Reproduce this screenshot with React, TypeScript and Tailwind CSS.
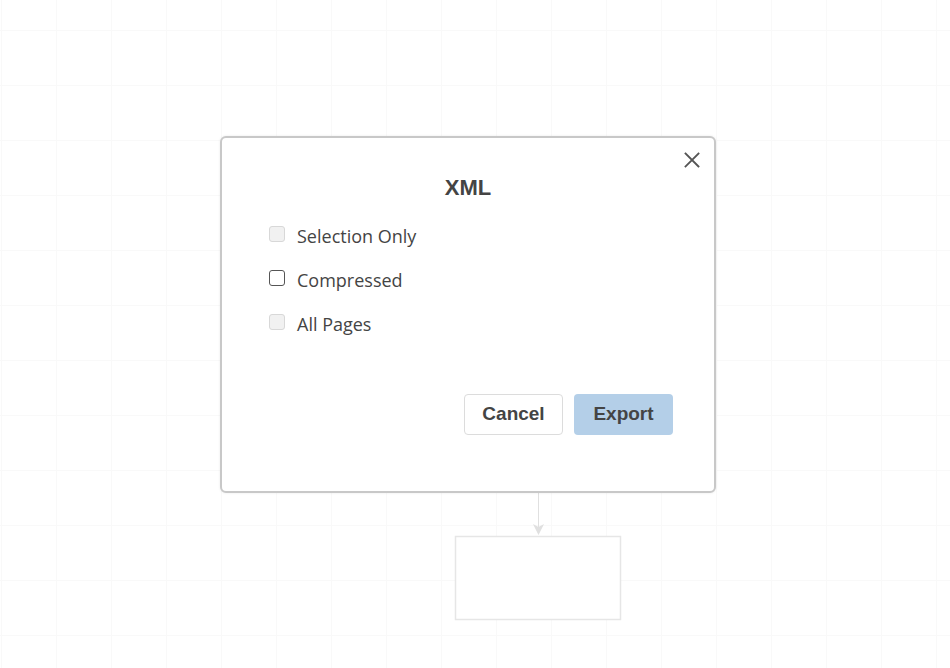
import React from "react";

export default function App() {
  return (
    <div className="relative w-[950px] h-[668px] overflow-hidden bg-white bg-[linear-gradient(to_right,#f9f9f9_1px,transparent_1px),linear-gradient(to_bottom,#f9f9f9_1px,transparent_1px)] bg-[size:55px_55px] bg-[position:1px_30px]" style={{ fontFamily: '"Open Sans", "Noto Sans", sans-serif' }}>
      {/* diagram behind */}
      <svg className="absolute left-0 top-0" width="950" height="668">
        <line x1="538.5" y1="480" x2="538.5" y2="528" stroke="#e0e0e0" strokeWidth="1" />
        <path d="M533 524 L538.5 535 L544 524 L538.5 527 Z" fill="#e0e0e0" />
        <rect x="455.5" y="536.5" width="165" height="83" fill="#fff" stroke="#e6e6e6" strokeWidth="1.5" />
      </svg>

      {/* dialog */}
      <div className="absolute left-[220px] top-[136px] w-[496px] h-[357px] bg-white border-2 border-[#c8c8c8] rounded-[6px] shadow-[0_0_3px_rgba(0,0,0,0.08)]">
        <button className="absolute right-[12px] top-[12px] w-[20px] h-[20px] flex items-center justify-center text-[#555]">
          <svg width="16" height="16" viewBox="0 0 16 16">
            <path d="M1.5 1.5 L14.5 14.5 M14.5 1.5 L1.5 14.5" stroke="#555" strokeWidth="1.8" strokeLinecap="square" />
          </svg>
        </button>
        <div className="pt-[36px] text-center text-[22px] font-bold text-[#444] leading-[28px]" style={{ fontFamily: '"Liberation Sans", Arial, sans-serif' }}>XML</div>
        <div className="mt-[20px] pl-[47px] flex flex-col gap-[16px]">
          <label className="flex items-center h-[28px] gap-[12px] text-[18px] text-[#444]">
            <span className="w-[16px] h-[16px] rounded-[3px] border border-[#d8d8d8] bg-[#f1f1f1] mt-[-4px]" />
            <span>Selection Only</span>
          </label>
          <label className="flex items-center h-[28px] gap-[12px] text-[18px] text-[#444]">
            <span className="w-[16px] h-[16px] rounded-[3px] border border-[#555] bg-white mt-[-4px]" />
            <span>Compressed</span>
          </label>
          <label className="flex items-center h-[28px] gap-[12px] text-[18px] text-[#444]">
            <span className="w-[16px] h-[16px] rounded-[3px] border border-[#d8d8d8] bg-[#f1f1f1] mt-[-4px]" />
            <span>All Pages</span>
          </label>
        </div>
        <div className="absolute right-[41px] top-[256px] flex gap-[11px]" style={{ fontFamily: '"Liberation Sans", Arial, sans-serif' }}>
          <button className="w-[99px] h-[41px] rounded-[4px] border border-[#dcdcdc] bg-white text-[19px] font-bold text-[#444]">Cancel</button>
          <button className="w-[99px] h-[41px] rounded-[4px] bg-[#b4cfe8] text-[19px] font-bold text-[#444]">Export</button>
        </div>
      </div>
    </div>
  );
}
